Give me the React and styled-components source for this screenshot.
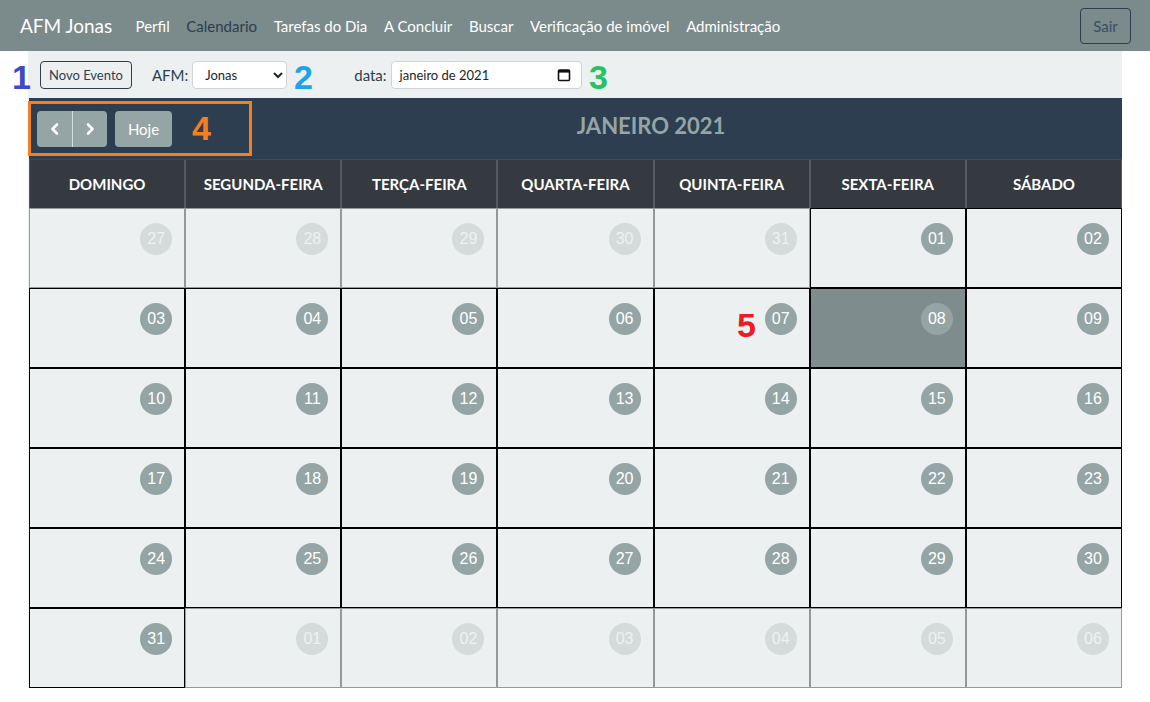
import React from 'react';
import styled, { createGlobalStyle } from 'styled-components';

const GlobalStyle = createGlobalStyle`
  body {
    margin: 0;
    background: #ffffff;
    font-family: Lato, "Liberation Sans", sans-serif;
  }
`;

// Layout
const Page = styled.div`
  position: relative;
  width: 1150px;
  min-height: 702px;
`;

const NavBar = styled.nav`
  display: flex;
  align-items: center;
  height: 51px;
  padding: 0 19px 0 20px;
  background: #7b8a8b;
`;

const Brand = styled.div`
  font-size: 19px;
  color: #ffffff;
  margin-right: 15px;
`;

const NavLink = styled.a`
  font-size: 15px;
  padding: 0 8.3px;
  color: ${(p) => (p.active ? '#2c3e50' : '#ffffff')};
  text-decoration: none;
`;

const SairButton = styled.button`
  margin-left: auto;
  height: 36px;
  width: 51px;
  border: 1px solid #2c3e50;
  border-radius: 4px;
  background: transparent;
  color: #3a4f63;
  font-family: Lato, sans-serif;
  font-size: 15px;
`;

const Main = styled.div`
  margin-left: 28px;
  width: 1094px;
  background: #ecf0f1;
`;

const Toolbar = styled.div`
  display: flex;
  align-items: center;
  height: 47px;
  padding-left: 12px;
`;

const OutlineButton = styled.button`
  height: 28px;
  padding: 0 8px;
  border: 1px solid #2c3e50;
  border-radius: 4px;
  background: transparent;
  color: #2c3e50;
  font-family: Lato, sans-serif;
  font-size: 13px;
  margin-right: 20px;
`;

const Label = styled.label`
  font-size: 15px;
  color: #2c3e50;
  margin-right: 4px;
`;

const Select = styled.select`
  height: 28px;
  width: 95px;
  padding: 0 8px;
  border: 1px solid #ced4da;
  border-radius: 4px;
  background: #ffffff;
  font-family: Lato, sans-serif;
  font-size: 13px;
  color: #212529;
  margin-right: 67px;
`;

const DateBox = styled.div`
  display: flex;
  align-items: center;
  justify-content: space-between;
  box-sizing: border-box;
  height: 28px;
  width: 191px;
  padding: 0 10px 0 8px;
  border: 1px solid #ced4da;
  border-radius: 4px;
  background: #ffffff;
  font-size: 13px;
  color: #212529;
`;

const Calendar = styled.div`
  width: 1093px;
  margin-left: 1px;
`;

const TitleBar = styled.div`
  display: flex;
  align-items: center;
  justify-content: space-between;
  height: 61px;
  padding: 0 0 0 8px;
  background: #2c3e50;
`;

const ButtonGroup = styled.div`
  display: flex;
  gap: 8px;
  width: 135px;
`;

const Pair = styled.div`
  display: flex;
`;

const CalButton = styled.button`
  display: flex;
  align-items: center;
  justify-content: center;
  height: 36px;
  width: ${(p) => p.w || 35}px;
  border: none;
  padding: 0;
  background: #95a5a6;
  color: #ffffff;
  font-family: Lato, sans-serif;
  font-size: 15px;
  border-radius: ${(p) => p.radius || '4px'};
  border-left: ${(p) => (p.divider ? '1px solid #d5dcdc' : 'none')};
`;

const Title = styled.h2`
  margin: 0 0 6px 8px;
  font-size: 22px;
  font-weight: 700;
  color: #95a5a6;
`;

const RightChunk = styled.div`
  width: 0;
`;

const HeaderRow = styled.div`
  display: grid;
  grid-template-columns: repeat(7, 1fr);
  height: 48px;
  background: #343a40;
  border-top: 1px solid #3e4a57;
`;

const HeaderCell = styled.div`
  display: flex;
  align-items: center;
  justify-content: center;
  border-left: 1px solid #565b62;
  border-right: 1px solid #565b62;
  color: #ffffff;
  font-weight: 700;
  font-size: 15px;
  text-transform: uppercase;
`;

const Grid = styled.div`
  display: grid;
  grid-template-columns: repeat(7, 1fr);
  grid-auto-rows: 80px;
`;

const DayCell = styled.div`
  display: flex;
  justify-content: flex-end;
  align-items: flex-start;
  padding: 14px 12px 0 0;
  box-sizing: border-box;
  border: 1px solid ${(p) => (p.other ? '#999999' : '#000000')};
  background: ${(p) => (p.today ? '#7f8c8d' : '#ecf0f1')};
`;

const DayNumber = styled.span`
  display: flex;
  align-items: center;
  justify-content: center;
  width: 32px;
  height: 32px;
  border-radius: 50%;
  background: ${(p) => (p.other ? '#d5dbdb' : '#95a5a6')};
  color: ${(p) => (p.other ? '#eef1f1' : '#ffffff')};
  font-family: "Liberation Sans", Arial, sans-serif;
  font-size: 16px;
`;

// Annotation overlays
const Marker = styled.span`
  position: absolute;
  left: ${(p) => p.x}px;
  top: ${(p) => p.y}px;
  font-family: "Liberation Sans Narrow", "Liberation Sans", sans-serif;
  font-weight: 700;
  font-size: 34px;
  line-height: 1;
  color: ${(p) => p.color};
`;

const Frame = styled.div`
  position: absolute;
  left: 28px;
  top: 101px;
  width: 218px;
  height: 49px;
  border: 3px solid #f57e20;
`;

const Chevron = ({ dir }) => (
  <svg width="14" height="14" viewBox="0 0 14 14" fill="none">
    <path
      d={dir === 'left' ? 'M9 2.5 L4.5 7 L9 11.5' : 'M5 2.5 L9.5 7 L5 11.5'}
      stroke="#ffffff"
      strokeWidth="2.6"
      strokeLinecap="round"
      strokeLinejoin="round"
    />
  </svg>
);

const CalendarIcon = () => (
  <svg width="14" height="14" viewBox="0 0 14 14" fill="none">
    <rect x="1.5" y="2" width="11" height="10.5" rx="1" stroke="#111" strokeWidth="1.6" />
    <rect x="1.5" y="2" width="11" height="2.6" fill="#111" />
  </svg>
);

const weekDays = ['Domingo', 'Segunda-feira', 'Terça-feira', 'Quarta-feira', 'Quinta-feira', 'Sexta-feira', 'Sábado'];
const links = ['Perfil', 'Calendario', 'Tarefas do Dia', 'A Concluir', 'Buscar', 'Verificação de imóvel', 'Administração'];

const buildDays = () => {
  const days = [];
  for (let d = 27; d <= 31; d++) days.push({ n: d, other: true });
  for (let d = 1; d <= 31; d++) days.push({ n: d, other: false, today: d === 8 });
  for (let d = 1; d <= 6; d++) days.push({ n: d, other: true });
  return days;
};

const App = () => {
  const days = buildDays();

  return (
    <Page>
      <GlobalStyle />
      <NavBar>
        <Brand>AFM Jonas</Brand>
        {links.map((l) => (
          <NavLink key={l} active={l === 'Calendario'}>{l}</NavLink>
        ))}
        <SairButton>Sair</SairButton>
      </NavBar>

      <Main>
        <Toolbar>
          <OutlineButton>Novo Evento</OutlineButton>
          <Label>AFM:</Label>
          <Select defaultValue="Jonas">
            <option>Jonas</option>
          </Select>
          <Label>data:</Label>
          <DateBox>
            <span>janeiro de 2021</span>
            <CalendarIcon />
          </DateBox>
        </Toolbar>

        <Calendar>
          <TitleBar>
            <ButtonGroup>
              <Pair>
                <CalButton radius="4px 0 0 4px"><Chevron dir="left" /></CalButton>
                <CalButton radius="0 4px 4px 0" divider><Chevron dir="right" /></CalButton>
              </Pair>
              <CalButton w={57}>Hoje</CalButton>
            </ButtonGroup>
            <Title>JANEIRO 2021</Title>
            <RightChunk />
          </TitleBar>
          <HeaderRow>
            {weekDays.map((d) => (
              <HeaderCell key={d}>{d}</HeaderCell>
            ))}
          </HeaderRow>
          <Grid>
            {days.map((d, i) => (
              <DayCell key={i} other={d.other} today={d.today}>
                <DayNumber other={d.other}>{String(d.n).padStart(2, '0')}</DayNumber>
              </DayCell>
            ))}
          </Grid>
        </Calendar>
      </Main>

      <Marker x={12} y={60} color="#3f48cc">1</Marker>
      <Marker x={294} y={60} color="#1ca3ec">2</Marker>
      <Marker x={589} y={60} color="#22c55e">3</Marker>
      <Frame />
      <Marker x={192} y={111} color="#f57e20">4</Marker>
      <Marker x={737} y={308} color="#ed1c24">5</Marker>
    </Page>
  );
};

export default App;
